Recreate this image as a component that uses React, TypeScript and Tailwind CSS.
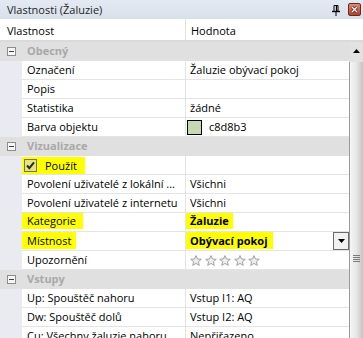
const font = { fontFamily: '"Open Sans", "Liberation Sans", sans-serif' };

type Row =
  | { kind: 'group'; label: string }
  | { kind: 'prop'; name: React.ReactNode; value?: React.ReactNode };

function MinusBox() {
  return (
    <svg width="9" height="9" viewBox="0 0 9 9" className="shrink-0">
      <rect x="0.5" y="0.5" width="8" height="8" fill="#f6f6f6" stroke="#8c8c8c" />
      <path d="M2 4.5h5" stroke="#404040" strokeWidth="1" />
    </svg>
  );
}

function Check() {
  return (
    <svg width="13" height="13" viewBox="0 0 13 13" className="shrink-0">
      <rect x="0.5" y="0.5" width="12" height="12" fill="#e6e38a" stroke="#77764a" />
      <path d="M3 6.5l2.3 2.6L10 3.3" fill="none" stroke="#25310c" strokeWidth="2" />
    </svg>
  );
}

function Star() {
  return (
    <svg width="12" height="11" viewBox="0 0 12 11">
      <path
        d="M6 0.6l1.5 3.4 3.8.3-2.9 2.4.9 3.7L6 8.4 2.7 10.4l.9-3.7L.7 4.3l3.8-.3z"
        fill="#eeeeee"
        stroke="#9a9a9a"
        strokeWidth="0.9"
        strokeLinejoin="round"
      />
    </svg>
  );
}

const mark = 'bg-[#ffff00] h-[17px] leading-[17px] flex items-center';

const rows: Row[] = [
  { kind: 'group', label: 'Obecný' },
  { kind: 'prop', name: 'Označení', value: 'Žaluzie obývací pokoj' },
  { kind: 'prop', name: 'Popis', value: '' },
  { kind: 'prop', name: 'Statistika', value: 'žádné' },
  {
    kind: 'prop',
    name: 'Barva objektu',
    value: (
      <span className="flex items-center gap-[7px] -ml-[3px]">
        <span className="w-[15px] h-[15px] border border-black bg-[#c8d8b3]" />
        c8d8b3
      </span>
    ),
  },
  { kind: 'group', label: 'Vizualizace' },
  {
    kind: 'prop',
    name: (
      <span className={`${mark} -ml-[5px] pl-[2px] pr-[8px] gap-[8px]`}>
        <Check />
        Použít
      </span>
    ),
    value: '',
  },
  { kind: 'prop', name: 'Povolení uživatelé z lokální ...', value: 'Všichni' },
  { kind: 'prop', name: 'Povolení uživatelé z internetu', value: 'Všichni' },
  {
    kind: 'prop',
    name: <span className={`${mark} -ml-[5px] pl-[5px] pr-[7px] -mt-[3px]`}>Kategorie</span>,
    value: <span className={`${mark} -ml-[6px] pl-[6px] pr-[4px] font-bold -mt-[3px]`}>Žaluzie</span>,
  },
  {
    kind: 'prop',
    name: <span className={`${mark} -ml-[5px] pl-[5px] pr-[5px] -mt-[2px]`}>Místnost</span>,
    value: (
      <div className="flex items-center justify-between w-full">
        <span className={`${mark} -ml-[6px] pl-[6px] pr-[5px] font-bold -mt-[2px]`}>Obývací pokoj</span>
        <span className="w-[16px] h-[18px] border border-[#6b6b6b] bg-[#f2f2f2] flex items-center justify-center mr-[0px]">
          <svg width="7" height="4" viewBox="0 0 7 4">
            <path d="M0 0h7L3.5 4z" fill="#000" />
          </svg>
        </span>
      </div>
    ),
  },
  {
    kind: 'prop',
    name: 'Upozornění',
    value: (
      <span className="flex gap-[2.5px] pt-[1px]">
        <Star />
        <Star />
        <Star />
        <Star />
        <Star />
      </span>
    ),
  },
  { kind: 'group', label: 'Vstupy' },
  { kind: 'prop', name: 'Up: Spouštěč nahoru', value: 'Vstup I1: AQ' },
  { kind: 'prop', name: 'Dw: Spouštěč dolů', value: 'Vstup I2: AQ' },
  { kind: 'prop', name: 'Cu: Všechny žaluzie nahoru', value: 'Nepřiřazeno' },
];

export default function App() {
  return (
    <div className="w-[363px] h-[338px] overflow-hidden bg-white text-[11px] text-black flex flex-col" style={font}>
      {/* title bar */}
      <div className="h-[19px] shrink-0 flex items-center bg-gradient-to-b from-[#e4eaf3] to-[#d8e0eb] pl-[7px] pr-[2px]">
        <span className="flex-1 text-[#1f1f1f] pt-[2px]">Vlastnosti (Žaluzie)</span>
        <svg width="8" height="11" viewBox="0 0 8 11" className="mr-[8px] mt-[1px]">
          <path d="M2 0.5h4v6H2z" fill="none" stroke="#000" strokeWidth="1" />
          <path d="M4.5 1v5.5" stroke="#000" strokeWidth="1.2" />
          <path d="M0 6.5h8" stroke="#000" strokeWidth="1.4" />
          <path d="M4 7v4" stroke="#000" strokeWidth="1" />
        </svg>
        <span className="w-[13px] h-[13px] border border-[#6a2a20] rounded-[2px] bg-gradient-to-b from-[#e08a74] to-[#b2402c] flex items-center justify-center">
          <svg width="7" height="7" viewBox="0 0 7 7">
            <path d="M1 1l5 5M6 1L1 6" stroke="#5a1a10" strokeWidth="2.6" />
            <path d="M1 1l5 5M6 1L1 6" stroke="#fff" strokeWidth="1.3" />
          </svg>
        </span>
      </div>

      {/* header */}
      <div className="h-[23px] shrink-0 flex border-b-2 border-[#dadada] bg-white">
        <div className="w-[186px] pl-[7px] pt-[3px] flex items-center border-r border-[#e2e2e2]">Vlastnost</div>
        <div className="flex-1 pl-[5px] pt-[3px] flex items-center">Hodnota</div>
      </div>

      {/* body */}
      <div className="flex flex-1 min-h-0">
        <div className="w-[349px] shrink-0 flex flex-col">
          {rows.map((r, i) =>
            r.kind === 'group' ? (
              <div key={i} className="h-[19px] shrink-0 flex items-center bg-[#e0e0e0]">
                <span className="w-[27px] pl-[7px] flex items-center">
                  <MinusBox />
                </span>
                <span className="font-bold text-[#a9a9a9]">{r.label}</span>
              </div>
            ) : (
              <div key={i} className="h-[19px] shrink-0 flex">
                <div className="w-[22px] shrink-0 bg-[#e9ebf1]" />
                <div className="w-[164px] shrink-0 pl-[5px] flex items-center border-b border-r border-[#e4e4e4] whitespace-nowrap overflow-hidden">
                  {r.name}
                </div>
                <div className="flex-1 pl-[4px] flex items-center border-b border-[#e4e4e4] whitespace-nowrap overflow-hidden">
                  {r.value}
                </div>
              </div>
            )
          )}
        </div>

        {/* scrollbar */}
        <div className="w-[14px] shrink-0 flex flex-col">
          <div className="h-[20px] shrink-0 bg-[#e2e2e2] flex justify-center pt-[7px] pl-[1px]">
            <svg width="7" height="4" viewBox="0 0 7 4">
              <path d="M3.5 0L7 4H0z" fill="#000" />
            </svg>
          </div>
          <div className="flex-1 border-l border-[#9a9a9a] bg-gradient-to-r from-[#f6f6f6] via-[#e6e6e6] to-[#c4c4c4] flex flex-col items-center pt-[193px] gap-[1px]">
            <span className="w-[7px] h-[1px] bg-[#7a7a7a]" />
            <span className="w-[7px] h-[1px] bg-[#7a7a7a]" />
            <span className="w-[7px] h-[1px] bg-[#7a7a7a]" />
            <span className="w-[7px] h-[1px] bg-[#7a7a7a]" />
          </div>
        </div>
      </div>
    </div>
  );
}
